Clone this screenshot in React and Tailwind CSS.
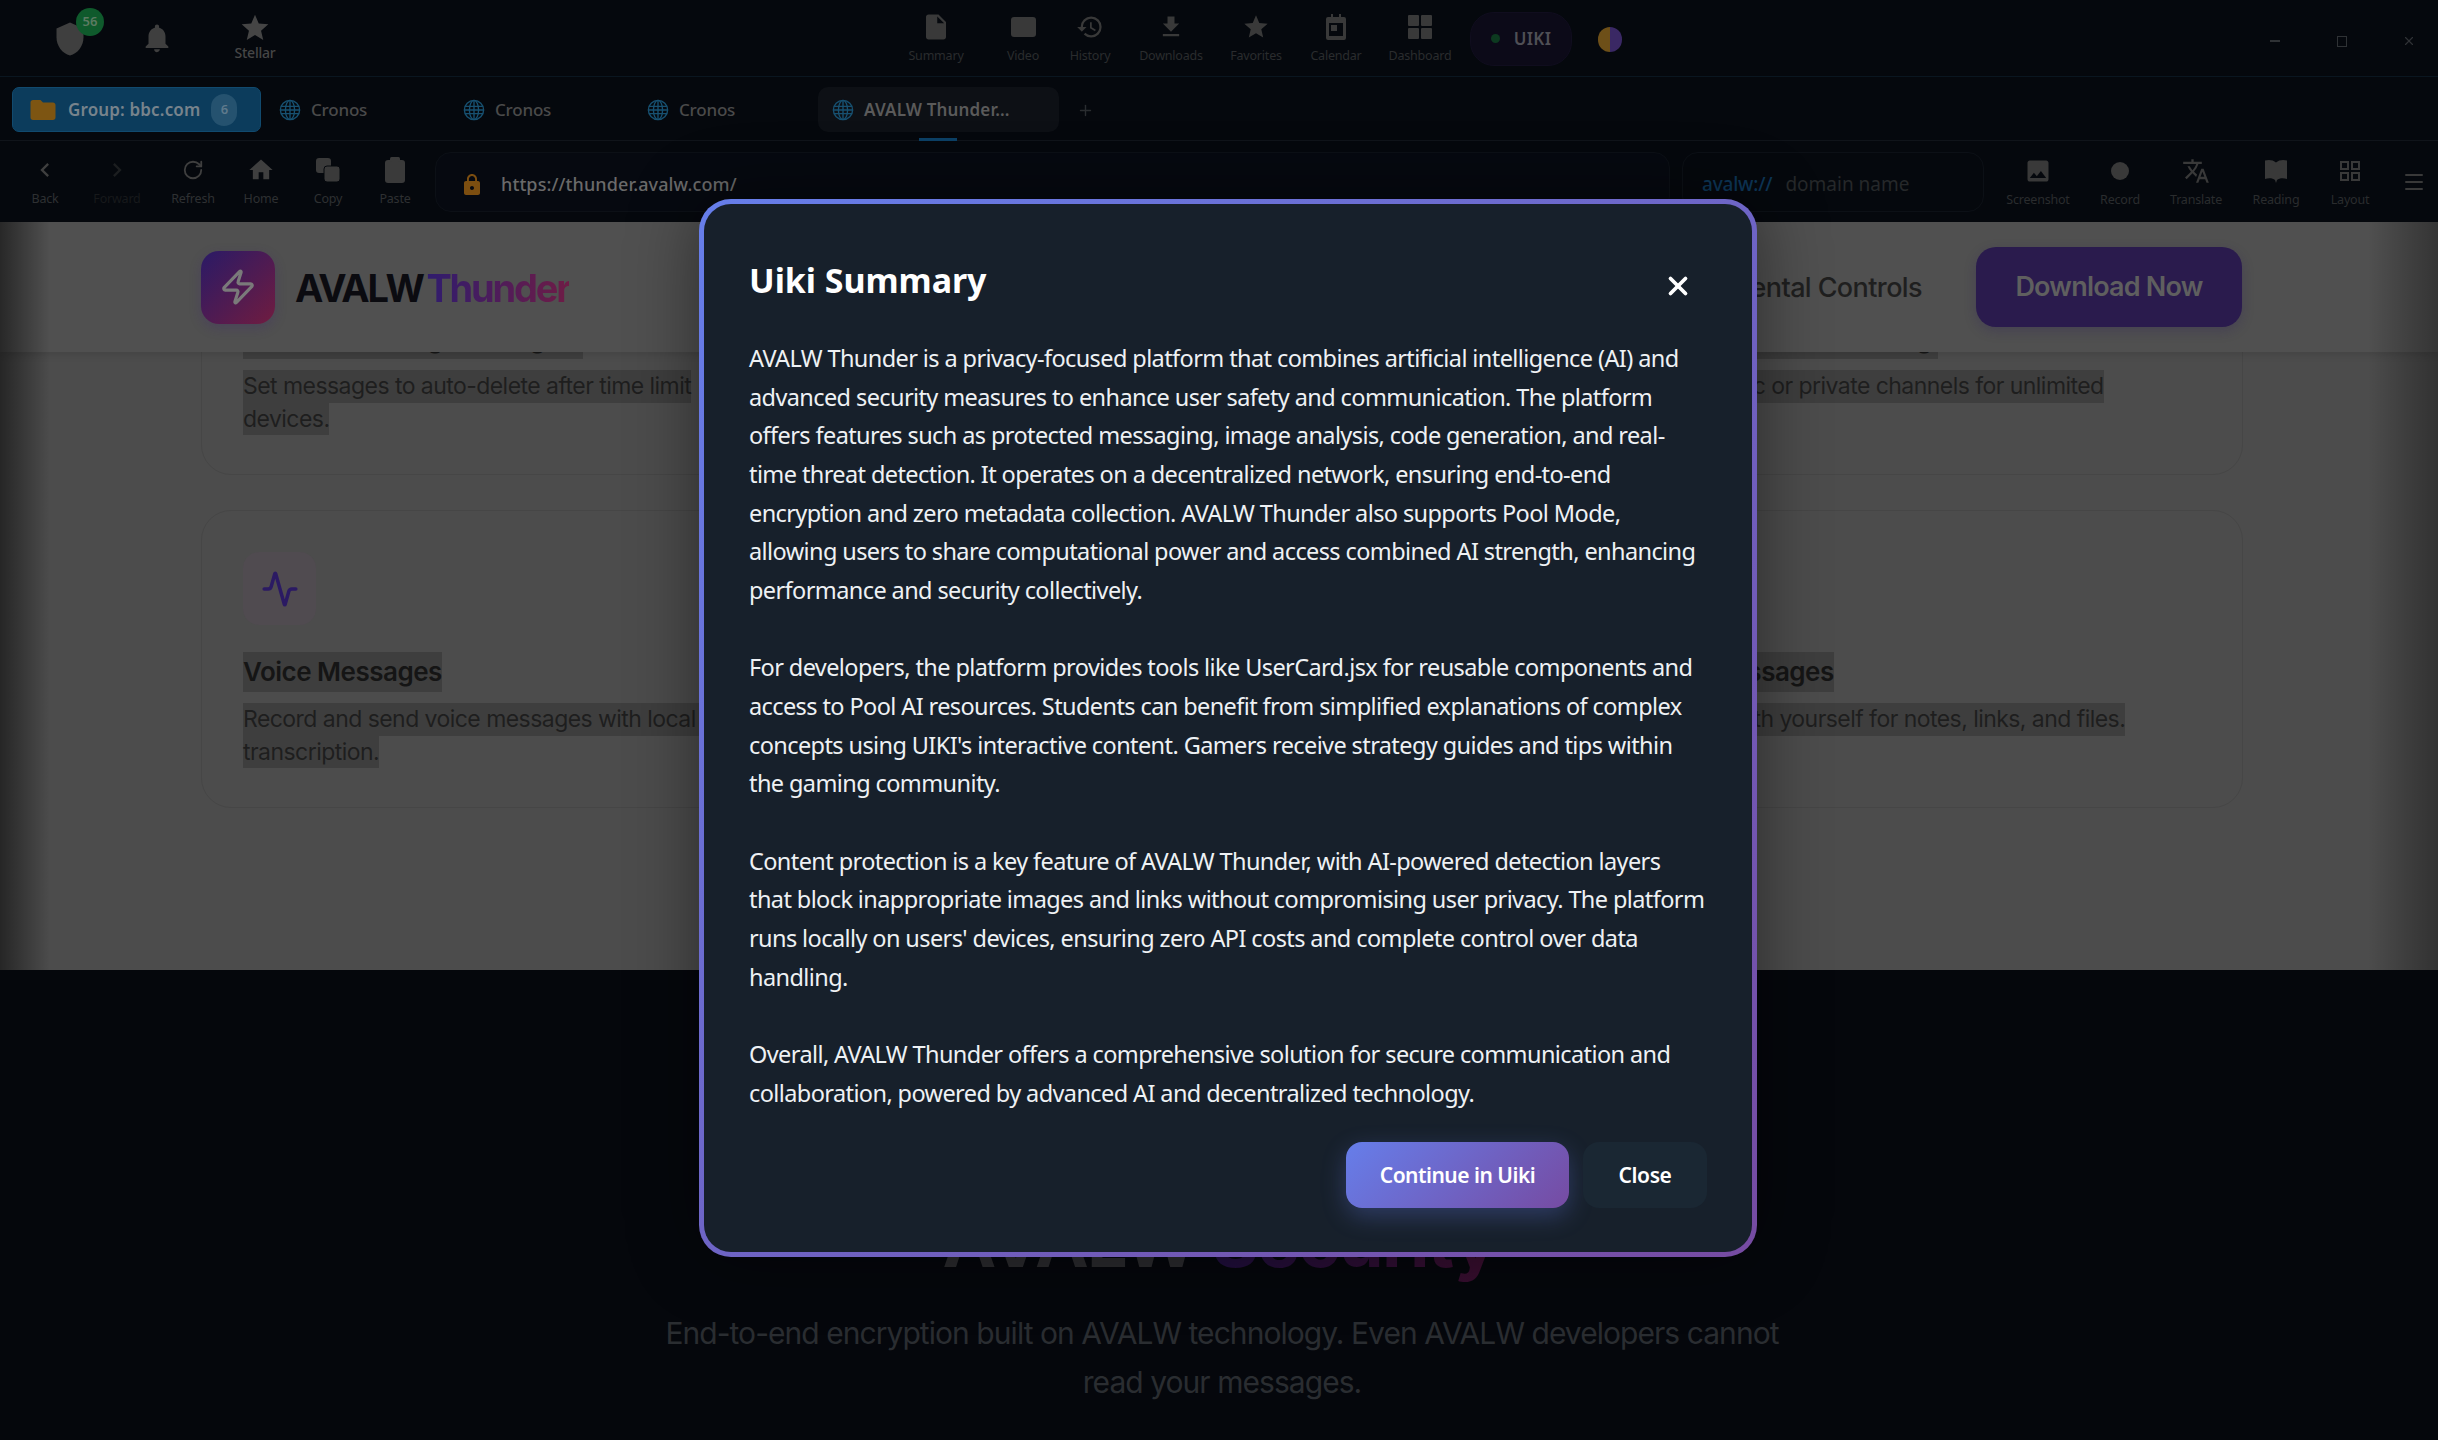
import React from "react";
import { MdShield, MdNotifications, MdStar, MdInsertDriveFile, MdHistory, MdFileDownload, MdFolder, MdHome, MdLock, MdImage, MdTranslate, MdChevronLeft, MdChevronRight } from "react-icons/md";
import { RotateCw, Zap, Activity, X, Plus, Menu } from "lucide-react";

const ui = "font-['Noto_Sans','Open_Sans',sans-serif]";
const web = "font-['Inter','Liberation_Sans',sans-serif]";

function Globe() {
  return (
    <svg width="22" height="22" viewBox="0 0 24 24" fill="none" stroke="#175070" strokeWidth="1.5" className="shrink-0">
      <circle cx="12" cy="12" r="10.5" />
      <ellipse cx="12" cy="12" rx="5" ry="10.5" />
      <path d="M12 1.5v21M2 8h20M2 16h20M1.5 12h21" />
    </svg>
  );
}
function VideoIcon() {
  return <div className="w-[25px] h-[20px] rounded-[3px] bg-[#393939]" />;
}
function CalendarIcon() {
  return (
    <svg width="22" height="26" viewBox="0 0 22 26" fill="#393939">
      <path d="M3 3h3V0h2v3h6V0h2v3h3a2 2 0 0 1 2 2v19a2 2 0 0 1-2 2H3a2 2 0 0 1-2-2V5a2 2 0 0 1 2-2z" />
      <rect x="4" y="9" width="14" height="13" fill="#05080d" />
      <rect x="6" y="11" width="6" height="6" fill="#393939" />
    </svg>
  );
}
function GridFill() {
  return (
    <svg width="24" height="24" viewBox="0 0 24 24" fill="#393939">
      <rect x="0" y="0" width="11" height="11" rx="1" />
      <rect x="13" y="0" width="11" height="11" rx="1" />
      <rect x="0" y="13" width="11" height="11" rx="1" />
      <rect x="13" y="13" width="11" height="11" rx="1" />
    </svg>
  );
}
function GridLine() {
  return (
    <svg width="20" height="20" viewBox="0 0 20 20" fill="none" stroke="#393939" strokeWidth="2">
      <rect x="1" y="1" width="7" height="7" />
      <rect x="12" y="1" width="7" height="7" />
      <rect x="1" y="12" width="7" height="7" />
      <rect x="12" y="12" width="7" height="7" />
    </svg>
  );
}
function CopyIcon() {
  return (
    <svg width="26" height="26" viewBox="0 0 26 26" fill="#3a3a3a">
      <rect x="1" y="1" width="15" height="15" rx="3" />
      <rect x="9" y="9" width="16" height="16" rx="3" stroke="#05080d" strokeWidth="1" />
    </svg>
  );
}
function PasteIcon() {
  return (
    <svg width="22" height="26" viewBox="0 0 22 26" fill="#3a3a3a">
      <rect x="1" y="3" width="20" height="23" rx="3" />
      <rect x="6" y="0" width="10" height="5" rx="1.5" />
    </svg>
  );
}
function BookIcon() {
  return (
    <svg width="24" height="24" viewBox="0 0 24 24" fill="#393939">
      <path d="M1 1.5C4 0.5 9 0.5 12 3.5C15 0.5 20 0.5 23 1.5V20C20 19 15 19 13 21L12 24L11 21C9 19 4 19 1 20Z" />
    </svg>
  );
}

const center = [
  ["Summary", "w-[92px]", <MdInsertDriveFile size={30} color="#393939" />],
  ["Video", "w-[82px]", <VideoIcon />],
  ["History", "w-[52px]", <MdHistory size={28} color="#393939" />],
  ["Downloads", "w-[110px]", <MdFileDownload size={28} color="#393939" />],
  ["Favorites", "w-[60px]", <MdStar size={28} color="#393939" />],
  ["Calendar", "w-[100px]", <CalendarIcon />],
  ["Dashboard", "w-[68px]", <GridFill />],
];

const nav = [
  ["Back", "w-[72px]", <MdChevronLeft size={28} color="#3f3f3f" />, "text-[#2e3032]"],
  ["Forward", "w-[72px]", <MdChevronRight size={28} color="#1c1e20" />, "text-[#17191b]"],
  ["Refresh", "w-[80px]", <RotateCw size={22} color="#3f3f3f" />, "text-[#2e3032]"],
  ["Home", "w-[56px]", <MdHome size={28} color="#3f3f3f" />, "text-[#2e3032]"],
  ["Copy", "w-[78px]", <CopyIcon />, "text-[#2e3032]"],
  ["Paste", "w-[56px]", <PasteIcon />, "text-[#2e3032]"],
];

const tools = [
  ["Screenshot", "w-[82px]", <MdImage size={28} color="#393939" />],
  ["Record", "w-[82px]", <div className="w-[18px] h-[18px] rounded-full bg-[#393939]" />],
  ["Translate", "w-[70px]", <MdTranslate size={28} color="#393939" />],
  ["Reading", "w-[90px]", <BookIcon />],
  ["Layout", "w-[58px]", <GridLine />],
];

function ToolItem({ label, w, icon, color = "text-[#2a2c2e]" }) {
  return (
    <div className={`${w} shrink-0 flex flex-col items-center`}>
      <div className="h-[30px] flex items-center justify-center">{icon}</div>
      <div className={`text-[12.5px] leading-[18px] mt-[5px] tracking-[-0.2px] whitespace-nowrap ${color}`}>{label}</div>
    </div>
  );
}

function Tab({ label }) {
  return (
    <div className="w-[184px] shrink-0 flex items-center gap-[10px] pl-[4px]">
      <Globe />
      <span className="text-[17px] font-medium text-[#4a4a4a] tracking-[-0.2px]">{label}</span>
    </div>
  );
}

function Browser() {
  return (
    <div className={`h-[222px] bg-[#05080d] shrink-0 flex flex-col ${ui}`}>
      <div className="h-[77px] border-b border-[#0a1620] flex items-center relative">
        <div className="w-[30px] shrink-0" />
        <div className="w-[80px] shrink-0 flex justify-center relative pt-[1px]">
          <MdShield size={36} color="#3f3f3f" />
          <div className="absolute left-[46px] top-[-12px] w-[28px] h-[28px] rounded-full bg-[#0f5a2c] flex items-center justify-center text-[13px] font-semibold text-[#5c7a62]">56</div>
        </div>
        <div className="w-[94px] shrink-0 flex justify-center">
          <MdNotifications size={34} color="#3f3f3f" />
        </div>
        <div className="w-[102px] shrink-0 flex flex-col items-center pb-[2px]">
          <MdStar size={32} color="#454545" />
          <span className="text-[14px] leading-[18px] font-medium text-[#464646] tracking-[-0.2px]">Stellar</span>
        </div>
        <div className="w-[584px] shrink-0" />
        {center.map(([l, w, i]) => (
          <ToolItem key={l} label={l} w={w} icon={i} />
        ))}
        <div className="ml-[16px] mt-[1px] w-[102px] h-[54px] rounded-[24px] bg-[#0c0a18] border border-[#100d1e] flex items-center justify-center gap-[14px] shrink-0">
          <div className="w-[9px] h-[9px] rounded-full bg-[#0d3a20]" />
          <span className="text-[17px] font-semibold text-[#4f4f55] tracking-[0.3px]">UIKI</span>
        </div>
        <div className="ml-[26px] mt-[2px] w-[24px] h-[25px] rounded-full overflow-hidden flex shrink-0">
          <div className="w-1/2 bg-[#6d4f18]" />
          <div className="w-1/2 bg-[#3a2864]" />
        </div>
        <div className="ml-auto flex items-center pt-[6px]">
          <div className="w-[58px] flex justify-center"><div className="w-[10px] h-[2px] bg-[#2f3235]" /></div>
          <div className="w-[76px] flex justify-center"><div className="w-[10px] h-[11px] border border-[#2f3235]" /></div>
          <div className="w-[58px] flex justify-center"><X size={14} color="#2f3235" /></div>
        </div>
      </div>

      <div className="h-[64px] border-b border-[#10141a] flex items-center pl-[12px] pt-[2px] relative">
        <div className="w-[249px] h-[45px] rounded-[7px] bg-[#0c3c5c] border border-[#114a6e] flex items-center pl-[19px] gap-[10px] shrink-0">
          <MdFolder size={30} color="#7d5512" className="-ml-[4px]" />
          <span className="text-[17px] font-semibold text-[#77838c] tracking-[0.15px]">Group: bbc.com</span>
          <div className="w-[26px] h-[32px] ml-[1px] rounded-full bg-[#25526f] flex items-center justify-center text-[13px] font-semibold text-[#5f7a8c]">6</div>
        </div>
        <div className="w-[14px] shrink-0" />
        <Tab label="Cronos" />
        <Tab label="Cronos" />
        <Tab label="Cronos" />
        <div className="w-[241px] h-[45px] -ml-[9px] rounded-[10px] bg-[#0d1015] flex items-center pl-[14px] gap-[10px] shrink-0 relative">
          <Globe />
          <span className="text-[17px] font-semibold text-[#5a5a5a] tracking-[0.15px] whitespace-nowrap">AVALW Thunder...</span>
          <div className="absolute left-[101px] bottom-[-9px] w-[38px] h-[3px] bg-[#0c4166]" />
        </div>
        <Plus size={17} color="#2a2d30" className="ml-[18px] mt-[2px]" />
      </div>

      <div className="h-[81px] flex items-center pl-[9px]">
        {nav.map(([l, w, i, c]) => (
          <ToolItem key={l} label={l} w={w} icon={i} color={c} />
        ))}
        <div className="ml-[12px] w-[1235px] h-[60px] rounded-[16px] border border-[#0c1016] bg-[#060910] flex items-center pl-[24px] pt-[6px] shrink-0">
          <MdLock size={24} color="#7c4e10" />
          <span className="ml-[17px] text-[18px] font-medium text-[#6a6a6a] tracking-[0.1px]">https://thunder.avalw.com/</span>
        </div>
        <div className="ml-[12px] w-[302px] h-[60px] rounded-[16px] border border-[#0c1016] flex items-center pl-[19px] pt-[6px] shrink-0">
          <span className="text-[19px] font-medium text-[#0d3657] tracking-[-0.2px]">avalw://</span>
          <span className="ml-[13px] text-[19px] text-[#26282a]">domain name</span>
        </div>
        <div className="ml-[13px] flex items-center pt-[1px]">
          {tools.map(([l, w, i]) => (
            <ToolItem key={l} label={l} w={w} icon={i} />
          ))}
        </div>
        <Menu size={24} color="#393939" className="ml-[23px]" />
      </div>
    </div>
  );
}

function Hl({ className, children }) {
  return <span className={`block w-fit whitespace-nowrap bg-[#3e3e3e] ${className}`}>{children}</span>;
}

const titleCls = "mt-[27px] text-[26px] leading-[40px] font-semibold text-[#151515] tracking-[-0.5px]";
const descCls = "text-[23px] leading-[32.5px] text-[#1e1e1e] tracking-[-0.55px]";

function Card({ icon, title, titleExtra = "", lines }) {
  return (
    <div className="h-[298px] rounded-[30px] border border-[#464646] p-[41px] min-w-0">
      {icon ? <div className="w-[73px] h-[73px] rounded-[16px] bg-[#504b50] flex items-center justify-center">{icon}</div> : <div className="h-[73px]" />}
      {title && <Hl className={`${titleCls} ${titleExtra}`}>{title}</Hl>}
      <div className="mt-[11px]">
        {(lines || []).map((l) => (
          <Hl key={l} className={descCls}>{l}</Hl>
        ))}
      </div>
    </div>
  );
}

function Page() {
  const a = <Activity size={38} color="#2b1a63" strokeWidth={2.2} />;
  return (
    <div className={`h-[748px] shrink-0 bg-[#4c4c4c] relative overflow-hidden ${web}`}>
      <div className="ml-[201px] mr-[195px] -mt-[45px] grid grid-cols-3 gap-[35px]">
        <Card title="Self-Destructing Messages" titleExtra="pr-[9px]" lines={["Set messages to auto-delete after time limit", "devices."]} />
        <Card />
        <Card title="Channels & Broadcasting" titleExtra="pr-[6px]" lines={["Create public or private channels for unlimited"]} />
        <Card icon={a} title="Voice Messages" lines={["Record and send voice messages with local AI", "transcription."]} />
        <Card />
        <Card title="Saved Messages" lines={["Solo chat with yourself for notes, links, and files."]} />
      </div>

      <div className="absolute top-0 left-0 right-0 h-[130px] bg-[#505050] shadow-[0_2px_8px_rgba(0,0,0,0.12)] flex items-center pl-[201px] pr-[196px]">
        <div className="w-[74px] h-[73px] rounded-[18px] bg-[linear-gradient(135deg,#2a1a66,#701c40)] flex items-center justify-center shadow-[0_4px_12px_rgba(60,30,120,0.25)]">
          <Zap size={38} color="#7a7a7a" strokeWidth={2} />
        </div>
        <div className="ml-[20px] text-[38px] font-bold tracking-[-2.2px] text-[#0b0b10] whitespace-nowrap pt-[2px]">
          AVALW <span className="-ml-[3px] text-transparent bg-clip-text bg-[linear-gradient(90deg,#2f1c6e,#6e1c46)]">Thunder</span>
        </div>
        <div className="ml-auto text-[27px] font-medium text-[#1f1f1f] tracking-[-0.6px] whitespace-nowrap pt-[2px]">Parental Controls</div>
        <div className="ml-[54px] w-[266px] h-[80px] rounded-[20px] bg-[#2a1b4d] flex items-center justify-center text-[27px] font-semibold text-[#5f5f5f] tracking-[-0.8px] shadow-[0_4px_12px_rgba(40,25,90,0.25)]">Download Now</div>
      </div>

      <div className="absolute inset-0 bg-[linear-gradient(90deg,rgba(0,0,0,0.5),rgba(0,0,0,0)_50px,rgba(0,0,0,0)_calc(100%-70px),rgba(0,0,0,0.35))]" />
    </div>
  );
}

function Security() {
  return (
    <div className={`flex-1 bg-[#05070c] flex flex-col items-center ${web}`}>
      <h2 className="mt-[233px] text-[72px] leading-[76px] font-bold tracking-[-1.75px] text-[#2b2b2e] whitespace-nowrap">
        AVALW <span className="text-transparent bg-clip-text bg-[linear-gradient(90deg,#1f0e3d,#3a0e2e)]">Security</span>
      </h2>
      <p className="mt-[30px] ml-[6px] w-[1200px] text-center text-[30px] leading-[48.5px] text-[#2a2d31] tracking-[-0.95px]">
        End-to-end encryption built on AVALW technology. Even AVALW developers cannot<br />read your messages.
      </p>
    </div>
  );
}

const summary = [
  ["AVALW Thunder is a privacy-focused platform that combines artificial intelligence (AI) and", "advanced security measures to enhance user safety and communication. The platform", "offers features such as protected messaging, image analysis, code generation, and real-", "time threat detection. It operates on a decentralized network, ensuring end-to-end", "encryption and zero metadata collection. AVALW Thunder also supports Pool Mode,", "allowing users to share computational power and access combined AI strength, enhancing", "performance and security collectively."],
  ["For developers, the platform provides tools like UserCard.jsx for reusable components and", "access to Pool AI resources. Students can benefit from simplified explanations of complex", "concepts using UIKI's interactive content. Gamers receive strategy guides and tips within", "the gaming community."],
  ["Content protection is a key feature of AVALW Thunder, with AI-powered detection layers", "that block inappropriate images and links without compromising user privacy. The platform", "runs locally on users' devices, ensuring zero API costs and complete control over data", "handling."],
  ["Overall, AVALW Thunder offers a comprehensive solution for secure communication and", "collaboration, powered by advanced AI and decentralized technology."],
];

function Modal() {
  return (
    <div className={`absolute left-[699px] top-[199px] w-[1058px] h-[1058px] rounded-[32px] p-[5px] bg-[linear-gradient(135deg,#667eea,#764ba2)] shadow-[0_0_70px_rgba(0,0,0,0.45)] ${ui}`}>
      <div className="w-full h-full rounded-[27px] bg-[#17202b] px-[45px] pt-[51px] flex flex-col">
        <div className="flex items-center justify-between h-[50px]">
          <h1 className="text-[34px] leading-[50px] font-bold text-white tracking-[-0.05px]">Uiki Summary</h1>
          <X size={30} color="#ffffff" strokeWidth={3} className="mr-[14px] mt-[11px]" />
        </div>
        <div className="mt-[34px] flex flex-col gap-[38.6px]">
          {summary.map((para, i) => (
            <p key={i} className="text-[23.5px] leading-[38.67px] text-[#eef1f4] tracking-[-0.6px]">
              {para.map((l) => (
                <span key={l} className="block whitespace-nowrap">{l}</span>
              ))}
            </p>
          ))}
        </div>
        <div className="mt-auto mb-[44px] flex justify-end gap-[14px]">
          <button className="w-[223px] h-[66px] pt-[2px] rounded-[16px] bg-[linear-gradient(135deg,#667eea,#764ba2)] text-[21px] font-semibold text-white tracking-[-0.5px] shadow-[0_8px_24px_rgba(102,126,234,0.3)]">Continue in Uiki</button>
          <button className="w-[124px] h-[66px] pt-[2px] rounded-[16px] bg-[#1a2733] text-[21px] font-semibold text-white tracking-[-0.4px]">Close</button>
        </div>
      </div>
    </div>
  );
}

export default function App() {
  return (
    <div className="w-[2438px] h-[1440px] relative overflow-hidden flex flex-col bg-[#05070c]">
      <Browser />
      <Page />
      <Security />
      <Modal />
    </div>
  );
}
